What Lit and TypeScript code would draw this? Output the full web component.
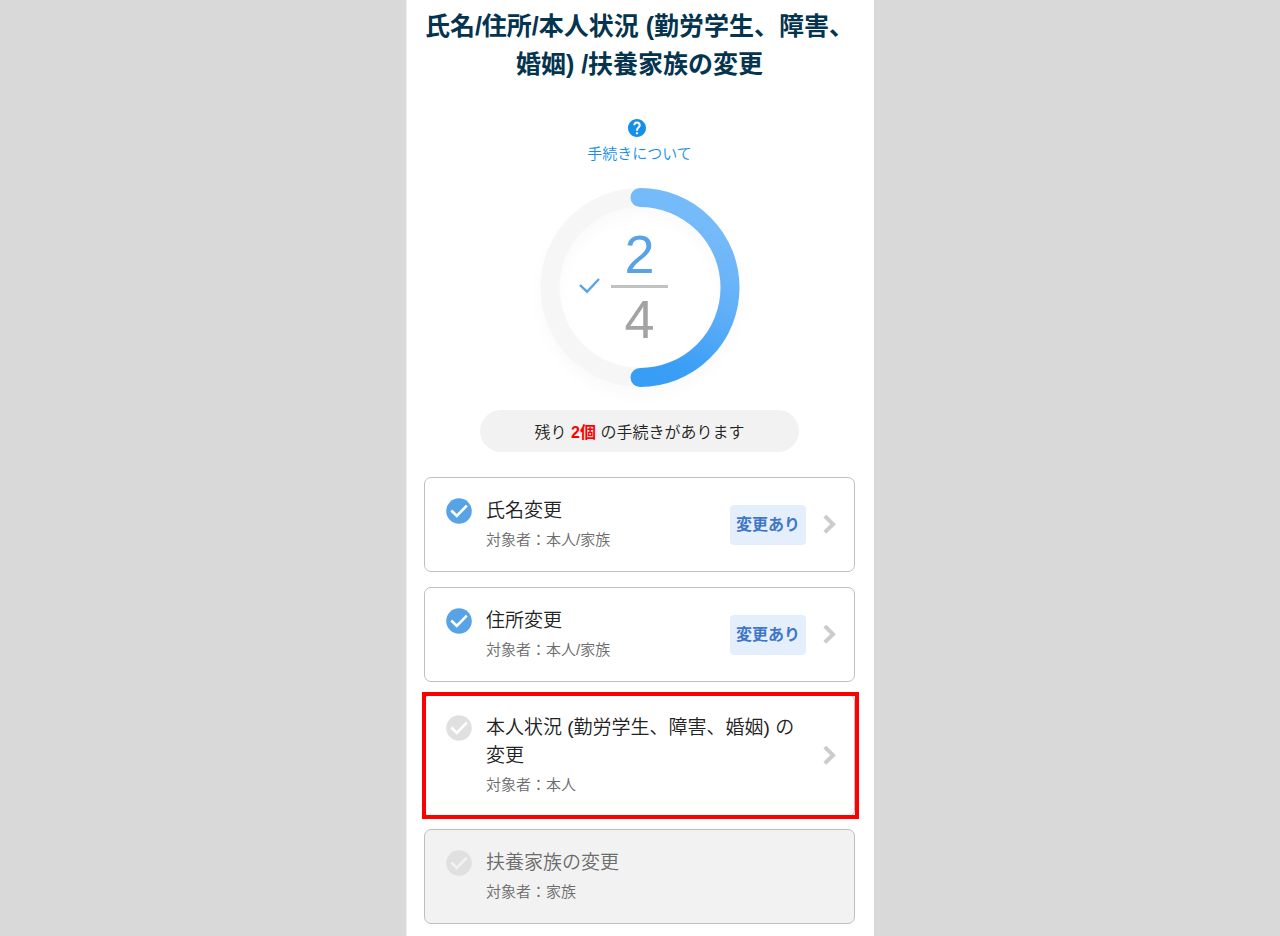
import { LitElement, html, svg, css, nothing } from "lit";
import { customElement, property } from "lit/decorators.js";
import { classMap } from "lit/directives/class-map.js";

interface Procedure {
  title: string;
  target: string;
  done?: boolean;
  changed?: boolean;
  highlighted?: boolean;
  disabled?: boolean;
}

const procedures: Procedure[] = [
  { title: "氏名変更", target: "本人/家族", done: true, changed: true },
  { title: "住所変更", target: "本人/家族", done: true, changed: true },
  { title: "本人状況 (勤労学生、障害、婚姻) の変更", target: "本人", highlighted: true },
  { title: "扶養家族の変更", target: "家族", disabled: true },
];

@customElement("progress-ring")
export class ProgressRing extends LitElement {
  @property({ type: Number }) done = 0;
  @property({ type: Number }) total = 1;

  static styles = css`
    :host {
      display: grid;
      justify-content: center;
    }
    .ring,
    .count {
      grid-area: 1 / 1;
    }
    .ring {
      display: block;
      width: 200px;
      height: 200px;
      overflow: visible;
    }
    .count {
      display: grid;
      grid-template-columns: 1fr 57px 1fr;
      column-gap: 11px;
      align-items: center;
      align-content: center;
      padding-bottom: 4px;
    }
    .check {
      justify-self: end;
      width: 21px;
      height: 16px;
    }
    .fraction {
      display: flex;
      flex-direction: column;
      text-align: center;
      font-size: 54px;
      line-height: 62px;
      color: #a3a3a3;
    }
    .done {
      color: #58a3e6;
      border-bottom: 3px solid #c2c2c2;
    }
  `;

  render() {
    const angle = (this.done / this.total) * 2 * Math.PI;
    const endX = 100 + 90 * Math.sin(angle);
    const endY = 100 - 90 * Math.cos(angle);
    const large = angle > Math.PI ? 1 : 0;
    return html`
      <svg class="ring" viewBox="0 0 200 200" aria-hidden="true">
        <defs>
          <linearGradient id="arc" gradientUnits="userSpaceOnUse" x1="165" y1="35" x2="100" y2="190">
            <stop offset="0" stop-color="#76bbf9" />
            <stop offset="0.4" stop-color="#63b0f8" />
            <stop offset="0.85" stop-color="#3a9ef5" />
            <stop offset="1" stop-color="#379df5" />
          </linearGradient>
          <filter id="shade" x="-20%" y="-20%" width="140%" height="140%">
            <feGaussianBlur stdDeviation="7" />
          </filter>
        </defs>
        <circle cx="100" cy="108" r="90" fill="none" stroke="#000" stroke-opacity="0.02" stroke-width="19" filter="url(#shade)" />
        <circle cx="100" cy="99.5" r="90" fill="none" stroke="#f6f6f6" stroke-width="19" />
        ${svg`<path d="M100 9.500A90 90 0 ${large} 1 ${endX} ${endY - 0.5}" fill="none" stroke="url(#arc)"
          stroke-width="19" stroke-linecap="round" />`}
      </svg>
      <div class="count">
        <svg class="check" viewBox="0 0 21 16" aria-hidden="true">
          <path d="M1 7L8 13.700L20 1" fill="none" stroke="#58a3e6" stroke-width="2.4" />
        </svg>
        <div class="fraction">
          <span class="done">${this.done}</span>
          <span>${this.total}</span>
        </div>
      </div>
    `;
  }
}

@customElement("procedure-card")
export class ProcedureCard extends LitElement {
  @property({ attribute: false }) item!: Procedure;

  static styles = css`
    :host {
      display: block;
      position: relative;
    }
    .card {
      box-sizing: border-box;
      display: flex;
      align-items: center;
      width: 100%;
      padding: 17px 18px 16px 21px;
      border: 1px solid #bfbfbf;
      border-radius: 7px;
      background: #fff;
      color: #222;
      font: inherit;
      text-align: left;
      cursor: pointer;
    }
    .card:disabled {
      background: #f2f2f2;
      color: #6c6c6c;
      cursor: default;
    }
    .mark {
      flex: none;
      align-self: flex-start;
      width: 26px;
      height: 26px;
      margin: 3px 14px 0 0;
      fill: #e0e0e0;
    }
    .mark.done {
      fill: #58a3e6;
    }
    .tick {
      fill: none;
      stroke: #fff;
      stroke-width: 2.6;
    }
    .card:disabled .tick {
      stroke: #f2f2f2;
    }
    .text {
      flex: 1;
      min-width: 0;
      padding-top: 2px;
    }
    .title,
    .target {
      display: block;
    }
    .title {
      font-size: 19px;
      line-height: 28px;
    }
    .target {
      font-size: 15px;
      line-height: 30px;
      color: #6c6c6c;
    }
    .badge {
      flex: none;
      padding: 0 6px;
      border-radius: 4px;
      background: #e5effc;
      color: #3f77c8;
      font-size: 16px;
      font-weight: 700;
      line-height: 40px;
    }
    .chevron {
      flex: none;
      width: 13px;
      height: 20px;
      margin-left: 17px;
    }
    .frame {
      position: absolute;
      inset: -2px -4px -2px -2px;
      border: 4px solid #f00;
      pointer-events: none;
    }
  `;

  render() {
    const { title, target, done, changed, highlighted, disabled } = this.item;
    return html`
      <button class="card" type="button" ?disabled=${disabled}>
        <svg class=${classMap({ mark: true, done: !!done })} viewBox="0 0 26 26" aria-hidden="true">
          <circle cx="13" cy="13" r="12.8" />
          <path class="tick" d="M5.3 12.5L10.8 17.8L20.8 7.6" />
        </svg>
        <span class="text">
          <span class="title">${title}</span>
          <span class="target">対象者：${target}</span>
        </span>
        ${changed ? html`<span class="badge">変更あり</span>` : nothing}
        ${disabled
          ? nothing
          : html`<svg class="chevron" viewBox="0 0 13 20" aria-hidden="true">
              <path d="M1.8 1L10 9.200L1.8 17.400" fill="none" stroke="#ccc" stroke-width="4" />
            </svg>`}
      </button>
      ${highlighted ? html`<div class="frame"></div>` : nothing}
    `;
  }
}

@customElement("app-root")
export class AppRoot extends LitElement {
  static styles = css`
    :host {
      display: flex;
      justify-content: center;
      min-height: 100vh;
      background: #d9d9d9;
      font-family: "Liberation Sans", "Noto Sans CJK JP", sans-serif;
      font-weight: 350;
      color: #222;
    }
    .panel {
      box-sizing: border-box;
      width: 100%;
      max-width: 468px;
      padding: 7px 19px 12px 17px;
      border-left: 1px solid #eee;
      background: #fff;
    }
    .heading {
      margin: 0;
      color: #05344f;
      font-size: 25px;
      line-height: 38px;
      text-align: center;
    }
    .about {
      display: flex;
      flex-direction: column;
      align-items: center;
      gap: 4px;
      width: fit-content;
      margin: 36px auto 21px;
      color: #1590e8;
      font-size: 15px;
      line-height: 26px;
      text-decoration: none;
    }
    .help {
      width: 18px;
      height: 18px;
      margin-right: 6px;
    }
    .remaining {
      width: 74%;
      box-sizing: border-box;
      margin: 22px auto 25px;
      padding-top: 4px;
      border-radius: 21px;
      background: #f2f2f2;
      font-size: 16px;
      line-height: 38px;
      text-align: center;
    }
    .number {
      color: #f00;
      font-weight: 700;
    }
    .list {
      display: flex;
      flex-direction: column;
      gap: 15px;
      margin: 0;
      padding: 0;
      list-style: none;
    }
    .highlighted {
      margin: -3px 0;
    }
  `;

  render() {
    const done = procedures.filter((p) => p.done).length;
    const rest = procedures.length - done;
    return html`
      <main class="panel">
        <h1 class="heading">氏名/住所/本人状況 (勤労学生、障害、婚姻) /扶養家族の変更</h1>
        <a class="about" href="#about">
          <svg class="help" viewBox="2 2 20 20" aria-hidden="true">
            <path
              fill="currentColor"
              d="M12 2C6.480 2 2 6.480 2 12s4.480 10 10 10 10-4.480 10-10S17.520 2 12 2zm1.200 17h-2.400v-2.200h2.400v2.200zm2.070-7.750l-.9.920C13.450 12.900 13.200 13.500 13.200 15h-2.400v-.5c0-1.100.45-2.100 1.170-2.830l1.240-1.260c.37-.36.590-.86.590-1.410 0-1.100-.8-1.900-1.800-1.900s-1.800.8-1.800 1.900H7.900c0-2.300 1.800-4.100 4.100-4.100s4.200 1.800 4.200 4.100c0 .88-.36 1.680-.93 2.250z"
            />
          </svg>
          手続きについて
        </a>
        <progress-ring .done=${done} .total=${procedures.length}></progress-ring>
        <p class="remaining">残り <strong class="number">${rest}個</strong> の手続きがあります</p>
        <ul class="list">
          ${procedures.map(
            (item) => html`<li class=${classMap({ highlighted: !!item.highlighted })}>
              <procedure-card .item=${item}></procedure-card>
            </li>`
          )}
        </ul>
      </main>
    `;
  }
}
